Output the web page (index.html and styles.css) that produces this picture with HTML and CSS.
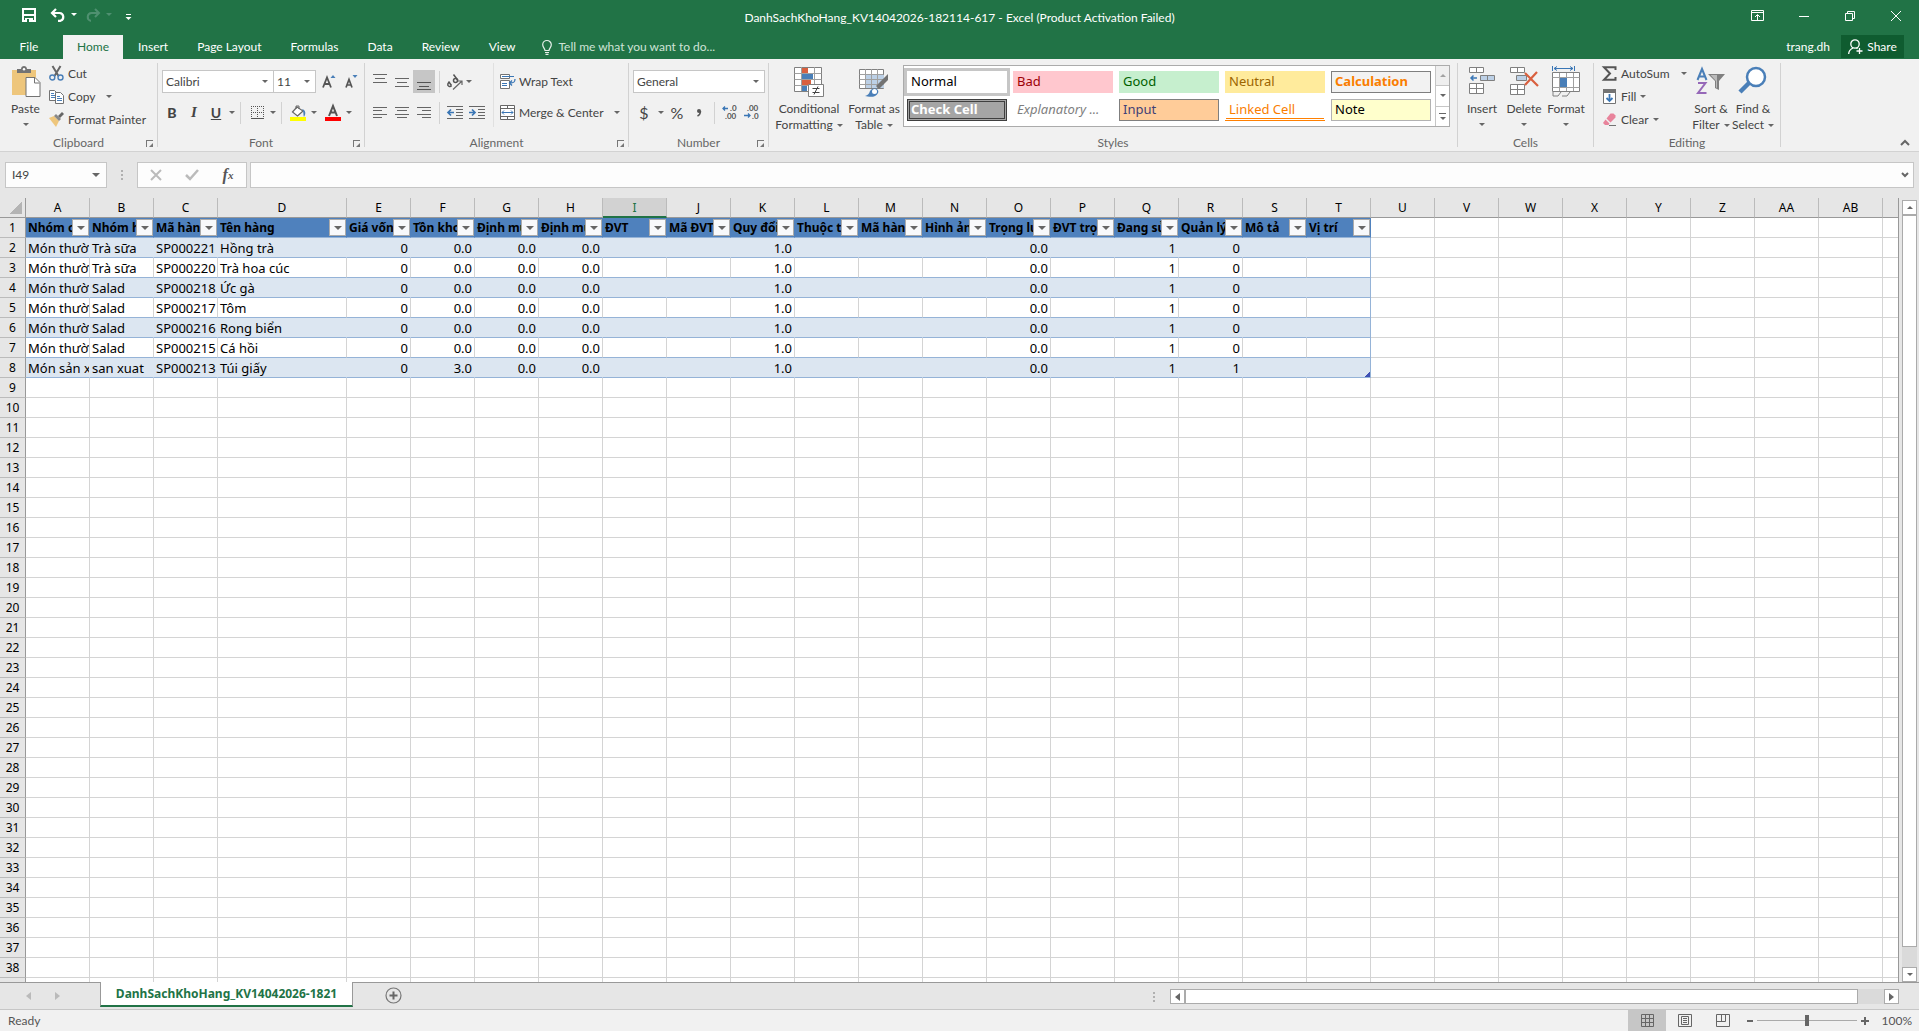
FILE: index.html
```html
<!DOCTYPE html>
<html lang="en">
<head>
<meta charset="utf-8">
<title>DanhSachKhoHang_KV14042026-182114-617 - Excel</title>
<link rel="stylesheet" href="styles.css">
</head>
<body>
<header class="titlebar">
  <div class="quick">
    <button aria-label="Save"><svg width="16" height="16" viewBox="0 0 16 16"><path d="M2 2h12v12H2z" fill="none" stroke="#fff" stroke-width="2"/><path d="M2 8h12" stroke="#fff" stroke-width="2"/><path d="M4 11h8v4H4z" fill="#fff"/><path d="M6 12h2v3H6z" fill="#217346"/></svg></button>
    <button aria-label="Undo" class="undo"><svg width="16" height="14" viewBox="0 0 16 14"><path d="M6 1L2 5l4 4M2 5h7.500a4 4 0 0 1 1 7.800H8" fill="none" stroke="#fff" stroke-width="2.200"/></svg></button>
    <i class="caret light"></i>
    <button aria-label="Redo" class="redo"><svg width="16" height="14" viewBox="0 0 16 14"><path d="M10 1l4 4-4 4M14 5H6.500a4 4 0 0 0-1 7.800H6" fill="none" stroke="#4f9070" stroke-width="2"/></svg></button>
    <i class="caret dim"></i>
    <button aria-label="Customize Quick Access Toolbar" class="custom"><svg width="7" height="8" viewBox="0 0 7 8"><path d="M1 1.500h5" stroke="#fff"/><path d="M0.500 4h6L3.500 7z" fill="#fff"/></svg></button>
  </div>
  <h1>DanhSachKhoHang_KV14042026-182114-617 - Excel (Product Activation Failed)</h1>
  <div class="window">
    <button aria-label="Ribbon Display Options"><svg width="14" height="12" viewBox="0 0 14 12"><path d="M.5.500h12v10H.5zM.5 2.500h12M6.500 10V5M4 7l2.500-2.500L9 7" fill="none" stroke="#fff"/></svg></button>
    <button aria-label="Minimize"><svg width="10" height="10" viewBox="0 0 10 10"><path d="M0 5.500h10" stroke="#fff"/></svg></button>
    <button aria-label="Restore"><svg width="10" height="10" viewBox="0 0 10 10"><path d="M.5 2.500h7v7h-7zM2.500 2V.5h7v7H8" fill="none" stroke="#fff"/></svg></button>
    <button aria-label="Close"><svg width="10" height="10" viewBox="0 0 10 10"><path d="M0 0l10 10M10 0L0 10" stroke="#fff"/></svg></button>
  </div>
</header>

<nav class="tabs">
  <button class="file">File</button>
  <button class="active">Home</button>
  <button>Insert</button>
  <button>Page Layout</button>
  <button>Formulas</button>
  <button>Data</button>
  <button>Review</button>
  <button>View</button>
  <label class="tell"><svg width="10" height="15" viewBox="0 0 10 15"><path d="M3 10.500C3 8.500.7 7.500.7 4.800a4.300 4.300 0 0 1 8.600 0C9.300 7.500 7 8.500 7 10.500zM3 12.500h4M3.500 14.300h3" fill="none" stroke="#e6f0ea" stroke-width="1.200"/></svg><input type="text" placeholder="Tell me what you want to do..."></label>
  <span class="user">trang.dh</span>
  <button class="share"><svg width="15" height="16" viewBox="0 0 15 16"><circle cx="7" cy="5" r="4.200" fill="none" stroke="#fff" stroke-width="1.300"/><path d="M.7 15c0-3 2-5 4.300-6M8.500 9l1 .7M11.500 9v6M8.500 12h6" fill="none" stroke="#fff" stroke-width="1.300"/></svg>Share</button>
</nav>

<section class="ribbon">
  <div class="group clipboard">
    <div class="body">
      <button class="big paste"><svg width="30" height="32" viewBox="0 0 30 32"><path d="M1 4h24v25H1z" fill="#eec67c"/><path d="M6 3h4c0-4 6-4 6 0h4v4H6z" fill="#737373"/><circle cx="13" cy="3.300" r="1.200" fill="#fff"/><path d="M15 11.500h9l5 5v14H15z" fill="#fff" stroke="#737373"/><path d="M23.500 12v5h5" fill="none" stroke="#737373"/></svg><span>Paste</span><i class="caret"></i></button>
      <div class="stack">
        <button><svg width="15" height="15" viewBox="0 0 15 15"><path d="M3.500 0l6 10M11.500 0l-6 10" stroke="#666" stroke-width="2"/><circle cx="3.300" cy="11.500" r="2.500" fill="none" stroke="#4a7fb8" stroke-width="1.400"/><circle cx="11.500" cy="11.500" r="2.500" fill="none" stroke="#4a7fb8" stroke-width="1.400"/></svg>Cut</button>
        <button><svg width="15" height="15" viewBox="0 0 15 15"><path d="M.5 1.500h5l3 3v7h-8z" fill="#fff" stroke="#737373"/><path d="M2 4.500h3M2 6.500h4M2 8.500h4" stroke="#4a7fb8"/><path d="M6.500 3.500h5l3 3v8h-8z" fill="#fff" stroke="#737373"/><path d="M8 7.500h3M8 9.500h5M8 11.500h5" stroke="#4a7fb8"/></svg>Copy<i class="caret far"></i></button>
        <button><svg width="15" height="15" viewBox="0 0 15 15"><path d="M0 6l5-2 5 5-3 6z" fill="#eec67c"/><path d="M5 4l2-2 5 5-2 2z" fill="#888"/><path d="M9 4l4-4 2 2-4 4z" fill="#666"/></svg>Format Painter</button>
      </div>
    </div>
    <footer>Clipboard<button class="launch" aria-label="Clipboard settings"></button></footer>
  </div>

  <div class="group font">
    <div class="body rows">
      <div class="row">
        <span class="combo face"><select aria-label="Font"><option>Calibri</option></select><i class="caret"></i></span><span class="combo size"><select aria-label="Font size"><option>11</option></select><i class="caret"></i></span>
        <button class="ib grow" aria-label="Increase font size"><svg width="15" height="15" viewBox="0 0 15 15"><path d="M1 13.500L5 3.500l4 10M2.500 10h5" fill="none" stroke="#555" stroke-width="1.800"/><path d="M8.500 4L11 1l2.500 3z" fill="#4a7fb8"/></svg></button>
        <button class="ib" aria-label="Decrease font size"><svg width="15" height="15" viewBox="0 0 15 15"><path d="M2 13.500l3-8 3 8M3 11h4" fill="none" stroke="#555" stroke-width="1.700"/><path d="M8.500 1L11 4l2.500-3z" fill="#4a7fb8"/></svg></button>
      </div>
      <div class="row">
        <button class="ib bold">B</button><button class="ib ital">I</button><button class="ib under">U</button><i class="caret"></i><hr>
        <button class="ib" aria-label="Borders"><svg width="13" height="13" viewBox="0 0 13 13"><path d="M0 .5h13M0 6.500h13M.5 0v12M6.500 0v12M12.500 0v12" stroke="#555" stroke-dasharray="1 1"/><path d="M0 12.500h13" stroke="#555"/></svg></button><i class="caret"></i><hr>
        <button class="ib" aria-label="Fill Color"><svg width="17" height="16" viewBox="0 0 17 16"><path d="M7 2L2.500 7l5 4L13 6z" fill="#fff" stroke="#666" stroke-width="1.200"/><path d="M6 4V1h3v3" fill="none" stroke="#666"/><path d="M12 4c4 1 4 5 2 8-1-3 0-5-2-8z" fill="#4a7fb8"/><path d="M0 12h16v4H0z" fill="#ff0"/></svg></button><i class="caret"></i>
        <button class="ib" aria-label="Font Color"><svg width="16" height="16" viewBox="0 0 16 16"><path d="M4 11l4-10 4 10M5.500 7.500h5" fill="none" stroke="#555" stroke-width="2"/><path d="M0 12h16v4H0z" fill="red"/></svg></button><i class="caret"></i>
      </div>
    </div>
    <footer>Font<button class="launch" aria-label="Font settings"></button></footer>
  </div>

  <div class="group align">
    <div class="body">
      <div class="rows left">
        <div class="row">
          <button class="ib" aria-label="Top Align"><svg width="14" height="16" viewBox="0 0 14 16"><path d="M0 .5h14M2 4.500h10M0 8.500h14" stroke="#666"/></svg></button><button class="ib" aria-label="Middle Align"><svg width="14" height="16" viewBox="0 0 14 16"><path d="M0 4.500h14M2 8.500h10M0 12.500h14" stroke="#666"/></svg></button><button class="ib on" aria-label="Bottom Align"><svg width="14" height="16" viewBox="0 0 14 16"><path d="M0 8.500h14M2 12.500h10M0 15.500h14" stroke="#555"/></svg></button><hr>
          <button class="ib" aria-label="Orientation"><svg width="16" height="16" viewBox="0 0 16 16"><g fill="none" stroke="#555" stroke-width="1.500"><path d="M1.500 7.500l3 4M3 8.500a2 2 0 1 0 1.500 3M6.500.500l4.500 6"/><circle cx="8.500" cy="6.500" r="2"/></g><path d="M6 15.500l8.500-8M15 11V7h-4" fill="none" stroke="#666" stroke-width="1.200"/></svg></button><i class="caret"></i>
        </div>
        <div class="row">
          <button class="ib" aria-label="Align Left"><svg width="14" height="13" viewBox="0 0 14 13"><path d="M0 1.500h14M0 4.500h9M0 8.500h14M0 11.500h9" stroke="#666"/></svg></button><button class="ib" aria-label="Center"><svg width="14" height="13" viewBox="0 0 14 13"><path d="M0 1.500h14M2 4.500h10M0 8.500h14M2 11.500h10" stroke="#666"/></svg></button><button class="ib" aria-label="Align Right"><svg width="14" height="13" viewBox="0 0 14 13"><path d="M0 1.500h14M5 4.500h9M0 8.500h14M5 11.500h9" stroke="#666"/></svg></button><hr>
          <button class="ib" aria-label="Decrease Indent"><svg width="16" height="13" viewBox="0 0 16 13"><path d="M0 .5h16M9 3.500h7M9 6.500h7M9 9.500h7M0 12.500h16" stroke="#666"/><path d="M7 6.500H1M4 3.500l-3 3 3 3" fill="none" stroke="#3a76b5" stroke-width="1.700"/></svg></button><button class="ib" aria-label="Increase Indent"><svg width="16" height="13" viewBox="0 0 16 13"><path d="M0 .5h16M9 3.500h7M9 6.500h7M9 9.500h7M0 12.500h16" stroke="#666"/><path d="M0 6.500h6M3 3.500l3 3-3 3" fill="none" stroke="#3a76b5" stroke-width="1.700"/></svg></button>
        </div>
      </div>
      <div class="rows right">
        <div class="row"><button class="lb"><svg width="16" height="15" viewBox="0 0 16 15"><path d="M.5.500h9v4h-9zM.5 6.500h9v8h-9z" fill="#fff" stroke="#737373"/><path d="M2 2.500h12M2 9.500h5M2 11.500h5" stroke="#3a76b5"/><path d="M15 5c0 3-1 4-5 4M12 6.500L9.500 9l2.500 2.500" fill="none" stroke="#3a76b5" stroke-width="1.300"/></svg>Wrap Text</button></div>
        <div class="row"><button class="lb"><svg width="16" height="15" viewBox="0 0 16 15"><path d="M.5.500h14v14H.5zM.5 3.500h14M.5 11.500h14M7.500 0v3M7.500 12v3" fill="#fff" stroke="#666"/><path d="M2 7.500h11M4 5.500l-2 2 2 2M11 5.500l2 2-2 2" fill="none" stroke="#3a76b5"/></svg>Merge &amp; Center<i class="caret"></i></button></div>
      </div>
    </div>
    <footer>Alignment<button class="launch" aria-label="Alignment settings"></button></footer>
  </div>

  <div class="group number">
    <div class="body rows">
      <div class="row"><span class="combo fmt"><select aria-label="Number format"><option>General</option></select><i class="caret"></i></span></div>
      <div class="row">
        <button class="ib sym">$</button><i class="caret"></i><button class="ib sym">%</button><button class="ib comma" aria-label="Comma Style"><svg width="6" height="8" viewBox="0 0 6 8"><circle cx="3" cy="2" r="2" fill="#555"/><path d="M4.500 2c0 2-1 4-3 5" stroke="#555" stroke-width="1.500" fill="none"/></svg></button><hr>
        <button class="ib" aria-label="Increase Decimal"><svg width="16" height="15" viewBox="0 0 16 15"><text x="8" y="6" font-size="8">.0</text><text x="3" y="14" font-size="8">.00</text><path d="M6 3.500H1M3 1.500l-2 2 2 2" fill="none" stroke="#3a76b5" stroke-width="1.300"/></svg></button><button class="ib" aria-label="Decrease Decimal"><svg width="16" height="15" viewBox="0 0 16 15"><text x="3" y="6" font-size="8">.00</text><text x="8" y="14" font-size="8">.0</text><path d="M0 10.500h6M4 8.500l2 2-2 2" fill="none" stroke="#3a76b5" stroke-width="1.300"/></svg></button>
      </div>
    </div>
    <footer>Number<button class="launch" aria-label="Number settings"></button></footer>
  </div>

  <div class="group styles">
    <div class="body">
      <button class="big cond"><svg width="30" height="32" viewBox="0 0 30 32"><path d="M.5 1.500h27v24H.5z" fill="#fff" stroke="#808080"/><path d="M.5 7.500h27M.5 13.500h27M.5 19.500h27M7.500 1v24M20.500 1v24" stroke="#a0a0a0"/><path d="M8 2h6v5H8zM8 14h9v5H8z" fill="#d9603f"/><path d="M8 8h11v5H8zM8 20h5v5H8z" fill="#4a7fb8"/><path d="M14.500 18.500h15v12h-15z" fill="#fff" stroke="#808080"/><path d="M18.500 22.500h7M18.500 26.500h7M24 20.500l-4 8" stroke="#444" fill="none"/></svg><span>Conditional</span><span>Formatting <i class="caret"></i></span></button>
      <button class="big fat"><svg width="30" height="32" viewBox="0 0 30 32"><path d="M.5 3.500h24v19H.5z" fill="#fff" stroke="#808080"/><path d="M6 9h19v13H6z" fill="#bcd0e6"/><path d="M.5 8.500h24M.5 13.500h24M.5 18.500h24M6.500 3v19M12.500 3v19M18.500 3v19" stroke="#a0a0a0"/><path d="M29 8v6l-9 9-3-3z" fill="#737373"/><path d="M6 30c3-1 4-2 5-5 3-5 10-2 8 2-2 5-9 4-13 3z" fill="#4a7fb8"/><circle cx="15.500" cy="25.500" r="2.500" fill="#fff"/></svg><span>Format as</span><span>Table <i class="caret"></i></span></button>
      <div class="gallery">
        <div class="cells">
          <button class="s-normal">Normal</button><button class="s-bad">Bad</button><button class="s-good">Good</button><button class="s-neutral">Neutral</button><button class="s-calc">Calculation</button>
          <button class="s-check">Check Cell</button><button class="s-expl">Explanatory ...</button><button class="s-input">Input</button><button class="s-linked">Linked Cell</button><button class="s-note">Note</button>
        </div>
        <div class="gscroll"><button class="off" aria-label="Previous styles"><i class="caret up"></i></button><button aria-label="Next styles"><i class="caret"></i></button><button class="more" aria-label="More styles"><i class="caret"></i></button></div>
      </div>
    </div>
    <footer>Styles</footer>
  </div>

  <div class="group cellsgrp">
    <div class="body">
      <button class="big"><svg width="28" height="32" viewBox="0 0 28 32"><path d="M1.500 1.500h14v5h-14zM8.500 1v5M1.500 17.500h14v10h-14zM1.500 22.500h14M8.500 17v10" fill="#fff" stroke="#808080"/><path d="M12.500 9.500h14v5h-14zM19.500 9v6" fill="#bcd0e6" stroke="#808080"/><path d="M9 12H3M5.500 9.500L3 12l2.500 2.500" fill="none" stroke="#3a76b5" stroke-width="1.500"/></svg><span>Insert</span><i class="caret"></i></button>
      <button class="big"><svg width="30" height="32" viewBox="0 0 30 32"><path d="M1.500 1.500h14v5h-14zM8.500 1v5M1.500 18.500h14v10h-14zM1.500 23.500h14M8.500 18v10" fill="#fff" stroke="#808080"/><path d="M7.500 9.500h10v5h-10z" fill="#bcd0e6" stroke="#808080"/><path d="M16 7l13 13M28 6L16 19" stroke="#d9603f" stroke-width="2.200"/></svg><span>Delete</span><i class="caret"></i></button>
      <button class="big"><svg width="28" height="32" viewBox="0 0 28 32"><path d="M.5 6.500h27v19H.5z" fill="#fff" stroke="#808080"/><path d="M.5 11.500h27M.5 21.500h27M7.500 7v18M14.500 7v18M21.500 7v18" stroke="#a0a0a0"/><path d="M8 12h7v9H8z" fill="#4a7fb8"/><path d="M.5 0v5M22.500 0v5M2 2.500h19M5 .5l-3 2 3 2M18 .5l3 2-3 2" fill="none" stroke="#3a76b5"/><path d="M1 26v4h5l3-4M10 30h5l3-4" fill="none" stroke="#808080"/></svg><span>Format</span><i class="caret"></i></button>
    </div>
    <footer>Cells</footer>
  </div>

  <div class="group editing">
    <div class="body">
      <div class="stack">
        <button><svg width="15" height="15" viewBox="0 0 15 15"><path d="M13.500 4V1.200H2L8 7.500 2 13.800h11.500V11" fill="none" stroke="#555" stroke-width="2"/></svg>AutoSum<i class="caret far"></i></button>
        <button><svg width="15" height="15" viewBox="0 0 15 15"><path d="M1.500.500h12v14h-12z" fill="#fff" stroke="#737373"/><path d="M1 0h13v4H1z" fill="#737373"/><path d="M7.500 5v7M4.500 9l3 3 3-3" fill="none" stroke="#3a76b5" stroke-width="1.800"/></svg>Fill<i class="caret"></i></button>
        <button><svg width="15" height="15" viewBox="0 0 15 15"><path d="M8.500 1.500h3l2 2v2l-5 5-4-4z" fill="#e8839b"/><path d="M3.500 7.500l4 4-1 1.500H3L1 11z" fill="#e8839b"/><path d="M7 13.500h7" stroke="#737373"/></svg>Clear<i class="caret"></i></button>
      </div>
      <button class="big sort"><svg width="30" height="32" viewBox="0 0 30 32"><path d="M1.500 14L6 3l4.500 11M3 10.500h6" fill="none" stroke="#4a7fb8" stroke-width="2"/><path d="M2 17h7.500L2 27h8.500" fill="none" stroke="#9668b8" stroke-width="2"/><path d="M12 8h17l-6 7v9l-4-2v-7z" fill="#808080"/><path d="M14.500 9l5.500 6v6.500l1 .5V9z" fill="#bbb"/></svg><span>Sort &amp;</span><span>Filter <i class="caret"></i></span></button>
      <button class="big find"><svg width="30" height="32" viewBox="0 0 30 32"><path d="M2 26l9-9" stroke="#4a7fb8" stroke-width="4.500"/><circle cx="18" cy="11" r="9" fill="#fff" stroke="#4a7fb8" stroke-width="2.500"/></svg><span>Find &amp;</span><span>Select <i class="caret"></i></span></button>
    </div>
    <footer>Editing</footer>
  </div>
  <button class="collapse" aria-label="Collapse the Ribbon"><svg width="10" height="7" viewBox="0 0 10 7"><path d="M1 6l4-4 4 4" fill="none" stroke="#666" stroke-width="2"/></svg></button>
</section>

<section class="formula">
  <span class="namebox"><input type="text" value="I49" aria-label="Name Box"><i class="caret wide"></i></span>
  <i class="dots"></i>
  <div class="fx">
    <button aria-label="Cancel"><svg width="12" height="12" viewBox="0 0 12 12"><path d="M1 1l10 10M11 1L1 11" stroke="#bbb" stroke-width="2"/></svg></button>
    <button aria-label="Enter"><svg width="14" height="12" viewBox="0 0 14 12"><path d="M1 6l4 4 8-9" fill="none" stroke="#bbb" stroke-width="2.500"/></svg></button>
    <button class="fn" aria-label="Insert Function">f<sub>x</sub></button>
  </div>
  <span class="entry"><input type="text" aria-label="Formula Bar"><svg width="8" height="6" viewBox="0 0 8 6"><path d="M1 1l3 3 3-3" fill="none" stroke="#666" stroke-width="2"/></svg></span>
</section>

<main class="sheet">
  <div class="pane"><table class="grid" id="grid"></table></div>
  <div class="vscroll"><button aria-label="Scroll up"><i class="caret up"></i></button><div class="thumb"></div><button aria-label="Scroll down"><i class="caret"></i></button></div>
</main>

<section class="sheetbar">
  <button class="nav" aria-label="Previous sheet"><i class="tri prev"></i></button>
  <button class="nav" aria-label="Next sheet"><i class="tri next"></i></button>
  <button class="sheettab">DanhSachKhoHang_KV14042026-1821</button>
  <button class="add" aria-label="New sheet"><svg width="17" height="17" viewBox="0 0 17 17"><circle cx="8.500" cy="8.500" r="7.500" fill="none" stroke="#777" stroke-width="1.200"/><path d="M8.500 4.500v8M4.500 8.500h8" stroke="#666" stroke-width="2"/></svg></button>
  <i class="dots"></i>
  <div class="hscroll"><button aria-label="Scroll left"><i class="tri prev"></i></button><div class="thumb"></div><button aria-label="Scroll right"><i class="tri next"></i></button></div>
</section>

<footer class="status">
  <span class="ready">Ready</span>
  <button class="on" aria-label="Normal view"><svg width="13" height="13" viewBox="0 0 13 13"><path d="M.5.500h12v12H.5zM.5 4.500h12M.5 8.500h12M4.500 0v13M8.500 0v13" fill="none" stroke="#666"/></svg></button>
  <button aria-label="Page Layout view"><svg width="14" height="13" viewBox="0 0 14 13"><path d="M.5.500h13v12H.5zM3.500 2.500h7v8h-7zM5 4.500h4M5 6.500h4M5 8.500h4" fill="none" stroke="#666"/></svg></button>
  <button aria-label="Page Break view"><svg width="14" height="13" viewBox="0 0 14 13"><path d="M.5.500h13v12H.5zM.5 7.500h9M5.500.500v7M9.500.500v7" fill="none" stroke="#666"/></svg></button>
  <button class="z" aria-label="Zoom out"><svg width="8" height="8" viewBox="0 0 8 8"><path d="M1 4h6" stroke="#666" stroke-width="2"/></svg></button>
  <input type="range" min="0" max="100" value="50" aria-label="Zoom">
  <button class="z" aria-label="Zoom in"><svg width="8" height="8" viewBox="0 0 8 8"><path d="M0 4h8M4 0v8" stroke="#666" stroke-width="2"/></svg></button>
  <span class="pct">100%</span>
</footer>
<script src="grid.js"></script>
</body>
</html>
```
FILE: grid.js
```js
const letters = [..."ABCDEFGHIJKLMNOPQRSTUVWXYZ", "AA", "AB", ""];
const heads = ["Nhóm cha", "Nhóm hàng", "Mã hàng", "Tên hàng", "Giá vốn", "Tồn kho", "Định mức", "Định mức", "ĐVT", "Mã ĐVT", "Quy đổi", "Thuộc tính", "Mã hàng", "Hình ảnh", "Trọng lượng", "ĐVT trọng", "Đang sử", "Quản lý", "Mô tả", "Vị trí"];
const items = [
  ["Món thường", "Trà sữa", "SP000221", "Hồng trà", "0.0", 0],
  ["Món thường", "Trà sữa", "SP000220", "Trà hoa cúc", "0.0", 0],
  ["Món thường", "Salad", "SP000218", "Ức gà", "0.0", 0],
  ["Món thường", "Salad", "SP000217", "Tôm", "0.0", 0],
  ["Món thường", "Salad", "SP000216", "Rong biển", "0.0", 0],
  ["Món thường", "Salad", "SP000215", "Cá hồi", "0.0", 0],
  ["Món sản xuất", "san xuat", "SP000213", "Túi giấy", "3.0", 1],
];
const grid = document.getElementById("grid");
const add = (row, tag, text, cls) => {
  const c = document.createElement(tag);
  if (cls) c.className = cls;
  c.textContent = text;
  row.append(c);
  return c;
};

const cols = document.createElement("colgroup");
["", ...letters].forEach((l, i) => {
  const c = document.createElement("col");
  c.className = i === 0 ? "c-head" : l === "D" ? "c-wide" : "c-std";
  cols.append(c);
});
grid.append(cols);

const headRow = grid.createTHead().insertRow();
add(headRow, "th", "", "corner");
letters.forEach(l => add(headRow, "th", l, l === "I" ? "col sel" : "col"));

const body = grid.createTBody();
for (let r = 1; r <= 39; r++) {
  const row = body.insertRow();
  add(row, "th", r < 39 ? r : "", "num");
  if (r === 1) row.className = "head";
  else if (r <= 8) row.className = r % 2 ? "data" : "data band";
  const it = items[r - 2];
  const values = it ? [it[0], it[1], it[2], it[3], "0", it[4], "0.0", "0.0", "", "", "1.0", "", "", "", "0.0", "", "1", it[5], "", ""] : [];
  letters.forEach((l, i) => {
    if (r === 1 && i < 20) {
      const th = add(row, "th", heads[i], "t");
      const b = add(th, "button", "", "filter");
      b.setAttribute("aria-label", "Filter " + heads[i]);
      add(b, "i", "", "caret");
    } else {
      const inside = r <= 8 && i < 20;
      add(row, "td", values[i] ?? "", inside ? (i > 3 ? "t n" : "t") + (i === 19 ? " last" : "") : "");
    }
  });
}
```
FILE: styles.css
```css
* { box-sizing: border-box; }
html, body { height: 100%; }
body {
  margin: 0;
  display: flex;
  flex-direction: column;
  overflow: hidden;
  background: #e6e6e6;
  color: #444;
  font: 12px/16px Lato, "Open Sans", sans-serif;
}
button, input, select { font: inherit; color: inherit; border: 0; padding: 0; margin: 0; background: none; outline: 0; }
button { display: flex; align-items: center; justify-content: center; white-space: nowrap; }
svg { display: block; flex: none; overflow: visible; }
svg text { fill: #555; font-weight: bold; }

.caret { display: inline-block; flex: none; width: 0; height: 0; border: 3px solid transparent; border-top-color: #666; border-bottom: 0; }
.caret.up { border-top: 0; border-bottom: 3px solid #666; }
.caret.wide { border-width: 4px 4px 0; }
.caret.light { border-top-color: #fff; }
.caret.dim { border-top-color: #4f9070; }

/* Title bar */
.titlebar { flex: none; height: 35px; background: #217346; color: #fff; display: grid; grid-template-columns: 1fr auto 1fr; align-items: center; }
.titlebar h1 { margin: 0; font-size: 12px; font-weight: normal; }
.quick { display: flex; align-items: center; padding: 0 0 6px 21px; }
.quick .undo { margin: 0 5px 0 13px; }
.quick .redo { margin: 0 5px 0 8px; }
.quick .custom { margin: 4px 0 0 13px; }
.window { display: flex; justify-content: flex-end; padding: 0 0 4px; }
.window button { width: 46px; height: 30px; }

/* Tabs */
.tabs { flex: none; height: 24px; background: #217346; color: #fff; display: flex; gap: 1px; }
.tabs button { padding: 0 14px; }
.tabs .file { width: 58px; margin-right: 4px; }
.tabs .active { background: #f1f1f1; color: #217346; }
.tell { display: flex; align-items: center; gap: 6px; margin-left: 12px; flex: 1; }
.tell input { width: 200px; }
.tell input::placeholder { color: #cfe3d7; opacity: 1; }
.user { align-self: center; margin-right: 10px; }
.tabs .share { background: #0f5c30; height: 23px; width: 63px; padding: 0; gap: 4px; margin-right: 15px; }

/* Ribbon */
.ribbon { flex: none; display: flex; background: #f1f1f1; border-bottom: 1px solid #d2d2d2; padding: 4px 0; }
.group { display: flex; flex-direction: column; flex: none; border-right: 1px solid #d2d2d2; height: 84px; }
.group .body { display: flex; flex: none; height: 70px; }
.group .body.rows, .rows { display: flex; flex-direction: column; gap: 8px; padding-top: 7px; }
.group footer { position: relative; text-align: center; color: #666; line-height: 20px; height: 14px; }
.row { display: flex; align-items: center; height: 23px; }
.row hr { width: 1px; height: 22px; margin: 0 5px; border: 0; background: #d2d2d2; }
.launch { position: absolute; right: 4px; top: 7px; width: 7px; height: 7px; border: solid #777; border-width: 1px 0 0 1px; }
.launch::after { content: ""; width: 4px; height: 4px; margin: 2px 0 0 2px; background: #777; clip-path: polygon(100% 0, 100% 100%, 0 100%); }
.ib { width: 22px; height: 23px; flex: none; }
.on { background: #c6c6c6; }
.big { flex: none; flex-direction: column; justify-content: flex-start; padding-top: 3px; color: #444; }
.big svg { margin-bottom: 3px; }
.big span { display: flex; align-items: center; gap: 4px; }
.big > .caret { margin-top: 6px; }
.stack { display: flex; flex-direction: column; flex: none; margin-top: -1px; }
.stack button { height: 23px; gap: 4px; justify-content: flex-start; }
.stack .far { margin-left: 7px; }

.clipboard { width: 158px; }
.clipboard .paste { width: 41px; margin-left: 5px; }
.clipboard .stack { margin-left: 3px; }
.font { width: 207px; }
.font .row { padding-left: 4px; }
.font .row + .row { padding-left: 3px; }
.font .ib + .caret { margin-left: 2px; }
.font .caret + .ib { margin-left: 5px; }
.bold { font-weight: 900; font-size: 14px; }
.ital { font: italic bold 15px "Liberation Serif", serif; }
.under { font-weight: bold; font-size: 14px; text-decoration: underline; }
.combo { position: relative; display: block; height: 23px; border: 1px solid #c6c6c6; background: #fff; }
.combo select { display: block; width: 100%; height: 21px; appearance: none; padding-left: 3px; }
.combo .caret { position: absolute; right: 5px; top: 9px; pointer-events: none; }
.face { width: 112px; }
.size { width: 43px; margin-left: -1px; }
.combo + .grow { margin-left: 2px; }

.align { width: 264px; }
.align .left { width: 128px; padding-left: 4px; }
.align .left .row hr { margin: 0 4px; }
.align .right { padding-left: 6px; border-left: 1px solid #e0e0e0; height: 64px; }
.lb { gap: 3px; }
.lb .caret { margin-left: 7px; }
.number { width: 140px; }
.number .row { padding-left: 4px; }
.number .fmt { width: 132px; }
.number .sym { font-size: 16px; }
.number .ib + .caret { margin: 0 2px 0 3px; }
.number .row hr { margin: 0 4px; }

.styles { width: 689px; }
.cond { width: 74px; margin-left: 3px; }
.fat { width: 56px; }
.gallery { display: flex; width: 547px; height: 62px; margin: 2px 0 0 1px; border: 1px solid #ababab; background: #fff; font: 13px/18px "Noto Sans", sans-serif; }
.cells { flex: 1; display: grid; grid-template-columns: repeat(5, 100px); grid-auto-rows: 22px; gap: 6px; padding: 5px 3px; }
.cells button { justify-content: flex-start; padding: 0 0 2px 3px; border: 1px solid transparent; }
.cells .s-normal { color: #000; outline: 3px solid #c6c6c6; }
.cells .s-bad { background: #ffc7ce; color: #9c0006; }
.cells .s-good { background: #c6efce; color: #006100; }
.cells .s-neutral { background: #ffeb9c; color: #9c6500; }
.cells .s-calc { background: #f2f2f2; color: #fa7d00; border-color: #7f7f7f; font-weight: bold; }
.cells .s-check { background: #a5a5a5; color: #fff; border: 3px double #3f3f3f; font-weight: bold; padding-left: 1px; }
.cells .s-expl { color: #7f7f7f; font-style: italic; }
.cells .s-input { background: #fc9; color: #3f3f76; border-color: #7f7f7f; }
.cells .s-linked { color: #fa7d00; border-bottom: 3px double #ff8001; padding-bottom: 0; }
.cells .s-note { background: #ffc; color: #000; border-color: #b2b2b2; }
.gscroll { width: 14px; display: flex; flex-direction: column; border-left: 1px solid #c6c6c6; }
.gscroll button { flex: 1; flex-direction: column; }
.gscroll button + button { border-top: 1px solid #c6c6c6; }
.gscroll .off { background: #e6e6e6; opacity: .6; }
.gscroll .more::before { content: ""; width: 7px; height: 1px; margin-bottom: 3px; background: #666; }

.cellsgrp { width: 136px; }
.cellsgrp .body { padding-left: 3px; }
.cellsgrp .big { width: 42px; }
.editing { width: 187px; }
.editing .stack { width: 96px; padding-left: 8px; }
.editing .sort, .editing .find { width: 42px; }
.collapse { align-self: flex-end; margin: 0 9px 1px auto; }

/* Formula bar */
.formula { flex: none; height: 46px; padding: 10px 5px; display: flex; }
.namebox, .fx, .entry { display: flex; align-items: center; height: 26px; border: 1px solid #c6c6c6; background: #fdfdfd; }
.namebox { width: 102px; padding: 0 6px; }
.namebox input { flex: 1; min-width: 0; }
.dots { width: 2px; height: 10px; background: repeating-linear-gradient(#b0b0b0 0 2px, transparent 2px 4px); }
.formula .dots { margin: 8px 14px; }
.fx { width: 110px; }
.fx button { width: 36px; }
.fn { font: italic bold 16px "Liberation Serif", serif; color: #555; }
.fn sub { font-size: 11px; }
.entry { flex: 1; margin-left: 3px; padding: 0 4px; }
.entry input { flex: 1; }

/* Worksheet */
.sheet { flex: 1; min-height: 0; display: flex; }
.pane { flex: 1; min-width: 0; overflow: hidden; border-right: 1px solid #999; background: #fff; }
.grid { table-layout: fixed; width: 1947px; border-collapse: separate; border-spacing: 0; font: 13px/18px "Noto Sans", sans-serif; color: #000; }
.c-head { width: 26px; }
.c-std { width: 64px; }
.c-wide { width: 129px; }
.grid th, .grid td { height: 20px; padding: 0 2px; overflow: hidden; white-space: nowrap; border: solid #d4d4d4; border-width: 0 1px 1px 0; text-align: left; }
.grid .corner { background: #e6e6e6 linear-gradient(135deg, transparent 50%, #b4b4b4 50%) 10px 4px / 12px 12px no-repeat; border-color: #999; }
.grid .col, .grid .num { background: #e6e6e6; font-weight: normal; text-align: center; font-size: 12px; }
.grid .col { border-right-color: #bbb; border-bottom-color: #999; }
.grid .num { border-right-color: #999; border-bottom-color: #bbb; padding: 0; }
.grid .col.sel { background: #d2d2d2; color: #217346; border-bottom: 2px solid #217346; line-height: 17px; }
.grid .t.n { text-align: right; }
.grid .head .t { position: relative; background: #4f81bd; border-color: #4f81bd; border-bottom-color: #95b3d7; font-size: 12px; }
.grid .data .t { border-bottom-color: #95b3d7; }
.grid .band .t { background: #dce6f1; border-right-color: #dce6f1; }
.grid .data .last { border-right-color: #95b3d7; }
.grid tr:nth-child(8) .last { background: #dce6f1 linear-gradient(135deg, transparent 50%, #3f51b5 50%) right bottom / 5px 5px no-repeat; }
.filter { position: absolute; right: 0; top: 1px; width: 17px; height: 17px; border: 1px solid #ababab; background: #f8f9fb; }
.filter .caret { border-width: 4px 4px 0; }
.vscroll { width: 20px; padding: 2px 2px 0 3px; display: flex; flex-direction: column; }
.vscroll button, .hscroll button { flex: none; width: 15px; height: 15px; border: 1px solid #ababab; background: #fff; }
.vscroll .thumb { flex: 1; width: 15px; border: 1px solid #ababab; background: #fff; margin-bottom: 20px; box-shadow: 0 20px #dadada; }

/* Sheet tabs */
.sheetbar { flex: none; height: 28px; display: flex; align-items: flex-start; border-bottom: 1px solid #c6c6c6; border-top: 1px solid #999; }
.tri { width: 0; height: 0; border: 4px solid transparent; }
.prev { border-right: 5px solid #666; border-left: 0; }
.next { border-left: 5px solid #666; border-right: 0; }
.nav { width: 29px; height: 26px; }
.nav .tri { opacity: .35; }
.nav:first-child { margin-left: 14px; }
.sheettab { margin: -1px 0 0 28px; width: 253px; height: 25px; background: #fff; color: #217346; font: bold 12px/18px "Noto Sans", sans-serif; border: solid #999; border-width: 0 1px; border-bottom: 2px solid #217346; }
.add { margin: 4px 0 0 32px; }
.sheetbar .dots { margin: 9px 15px 0 auto; }
.hscroll { width: 38%; display: flex; margin: 6px 20px 0 0; background: #dadada; }
.hscroll .thumb { flex: 1; margin-right: 26px; border: 1px solid #ababab; background: #fff; }

/* Status bar */
.status { flex: none; height: 21px; display: flex; align-items: center; background: #f1f1f1; color: #555; padding: 0 7px 0 8px; }
.ready { margin-right: auto; }
.status button { width: 38px; height: 21px; }
.status .z { width: 15px; }
.status input { width: 100px; height: 12px; appearance: none; background: linear-gradient(#aaa, #aaa) center / 100% 1px no-repeat; }
.status input::-webkit-slider-thumb { appearance: none; width: 4px; height: 11px; background: #666; }
.pct { width: 40px; text-align: right; }
```
